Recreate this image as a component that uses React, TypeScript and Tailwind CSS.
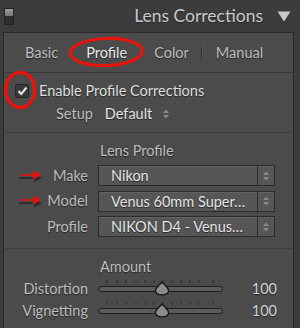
import * as React from "react";

const shadow = "[text-shadow:0_1px_1px_#262626]";

function Stepper() {
  return (
    <svg width="8" height="12" viewBox="0 0 8 12">
      <path d="M1 5 L4 1.5 L7 5 Z" fill="#8a8a8a" />
      <path d="M1 7 L4 10.5 L7 7 Z" fill="#8a8a8a" />
    </svg>
  );
}

function Select({ value }: { value: string }) {
  return (
    <div className="flex h-[21px] w-[177px] border border-[#2c2c2c] bg-[#565656] shadow-[inset_0_1px_0_#626262]">
      <div className={`flex-1 truncate pl-[12px] text-[14.5px] leading-[19px] text-[#e4e4e4] ${shadow}`}>{value}</div>
      <div className="flex w-[17px] items-center justify-center border-l border-[#2c2c2c]">
        <Stepper />
      </div>
    </div>
  );
}

function RedArrow() {
  return (
    <svg width="28" height="14" viewBox="0 0 28 14" className="absolute left-[12px] top-1/2 -translate-y-1/2">
      <path d="M3 6 H18 V2.5 L26 7 L18 11.5 V8 H3 Z" fill="#111" opacity="0.5" transform="translate(0 2)" />
      <path d="M4 5.2 H17 V1.5 L25 6 L17 10.5 V6.8 H4 Z" fill="#e8130b" />
    </svg>
  );
}

function Row({ label, value, arrow }: { label: string; value: string; arrow?: boolean }) {
  return (
    <div className="relative flex h-[25.5px] items-center">
      {arrow && <RedArrow />}
      <div className={`w-[84px] text-right text-[14.5px] text-[#bdbdbd] ${shadow}`}>{label}</div>
      <div className="ml-[10px]">
        <Select value={value} />
      </div>
    </div>
  );
}

function Slider() {
  const ticks = [107, 117, 126, 136, 145, 154, 163, 172, 181, 190, 199, 213];
  return (
    <svg width="126" height="18" viewBox="0 0 126 18">
      {ticks.map((x) => (
        <line key={x} x1={x - 98} x2={x - 98} y1="0" y2="3" stroke="#2e2e2e" strokeWidth="1" />
      ))}
      <rect x="0.5" y="6.5" width="124" height="5" rx="2.5" fill="#5a5a5a" stroke="#1f1f1f" />
      <path d="M64 2 C61 5.5 57.5 7.5 57.5 10.8 C57.5 13.2 60 14.8 64 14.8 C68 14.8 70.5 13.2 70.5 10.8 C70.5 7.5 67 5.5 64 2 Z" fill="#8c8c8c" stroke="#111" strokeWidth="1.2" />
    </svg>
  );
}

function SliderRow({ label, value }: { label: string; value: string }) {
  return (
    <div className="flex h-[22px] items-center">
      <div className={`w-[84px] text-right text-[14.5px] text-[#bdbdbd] ${shadow}`}>{label}</div>
      <div className="ml-[10px] flex">
        <Slider />
      </div>
      <div className={`ml-auto mr-[16px] text-[14.5px] text-[#d2d2d2] ${shadow}`}>{value}</div>
    </div>
  );
}

export default function App() {
  return (
    <div className="relative h-[328px] w-[300px] overflow-hidden bg-[#3c3c3c] font-['Lato',sans-serif]">
      <div className="flex h-[32px] items-center">
        <div className="ml-[4px] flex h-[17px] w-[10px] flex-col border border-[#222]">
          <div className="flex-1 bg-[linear-gradient(#9a9a9a,#767676)]" />
          <div className="flex-1 bg-[#2d2d2d]" />
        </div>
        <div className={`ml-auto text-[17.5px] text-[#c9c9c9] ${shadow}`}>Lens Corrections</div>
        <svg width="14" height="11" viewBox="0 0 14 11" className="ml-[14px] mr-[9px]">
          <path d="M0.5 0.5 H13.5 L7 10.5 Z" fill="#c9c9c9" />
        </svg>
      </div>

      <div className="ml-[3px] mr-[6px] h-[300px] border border-[#2a2a2a] bg-[#4b4b4b]">
        <div className={`flex h-[39px] items-center text-[14.5px] text-[#bcbcbc] ${shadow}`}>
          <span className="ml-[21px]">Basic</span>
          <span className="ml-[28px] text-[#e8e8e8]">Profile</span>
          <span className="ml-[27px]">Color</span>
          <span className="ml-[12px] h-[13px] w-[2px] border-l border-[#333] border-r border-r-[#585858]" />
          <span className="ml-[13px]">Manual</span>
        </div>
        <div className="border-t border-[#393939]" />

        <div className="flex h-[32px] items-center pt-[4px]">
          <div className="ml-[11px] flex h-[14px] w-[14px] items-center justify-center rounded-[2px] border border-[#262626] bg-[#3a3a3a]">
            <svg width="11" height="10" viewBox="0 0 11 10">
              <path d="M1.5 5 L4.2 8 L9.5 1.5" fill="none" stroke="#e6e6e6" strokeWidth="2" />
            </svg>
          </div>
          <span className={`ml-[10px] text-[14.5px] text-[#dedede] ${shadow}`}>Enable Profile Corrections</span>
        </div>
        <div className="flex h-[18px] items-center">
          <span className={`ml-[52px] text-[14.5px] text-[#bdbdbd] ${shadow}`}>Setup</span>
          <span className={`ml-[12px] text-[14.5px] text-[#e4e4e4] ${shadow}`}>Default</span>
          <span className="ml-[10px] flex">
            <Stepper />
          </span>
        </div>
        <div className="mt-[9px] border-t border-[#3d3d3d]" />

        <div className={`flex h-[30px] items-center pl-[96px] pt-[6px] text-[14.5px] text-[#bdbdbd] ${shadow}`}>Lens Profile</div>
        <Row label="Make" value="Nikon" arrow />
        <Row label="Model" value="Venus 60mm Super…" arrow />
        <Row label="Profile" value="NIKON D4 - Venus…" />
        <div className="mt-[8px] border-t border-[#3d3d3d]" />

        <div className={`flex h-[29px] items-center pl-[96px] pt-[7px] text-[14.5px] text-[#bdbdbd] ${shadow}`}>Amount</div>
        <SliderRow label="Distortion" value="100" />
        <SliderRow label="Vignetting" value="100" />
      </div>

      <svg width="300" height="328" className="pointer-events-none absolute left-0 top-0">
        <ellipse cx="106" cy="52" rx="36" ry="13.5" fill="none" stroke="#e5140c" strokeWidth="3.2" transform="rotate(-2 106 52)" />
        <ellipse cx="20" cy="90" rx="14.5" ry="17.5" fill="none" stroke="#e5140c" strokeWidth="3.5" />
      </svg>
    </div>
  );
}
